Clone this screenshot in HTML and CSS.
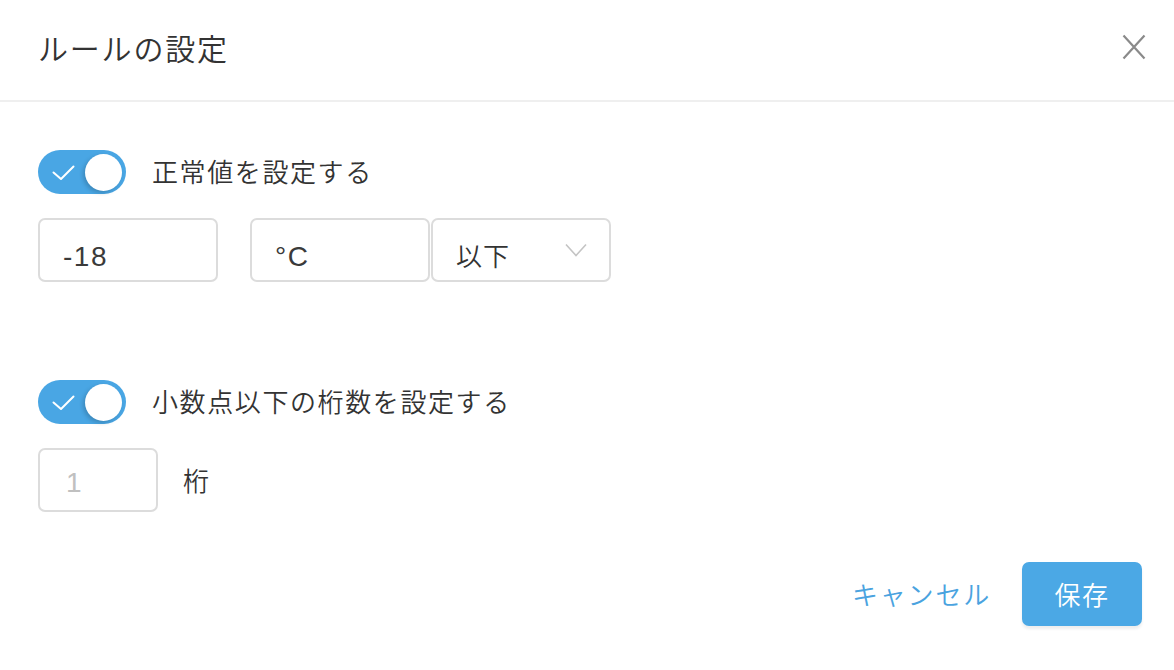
FILE: index.html
```html
<!DOCTYPE html>
<html lang="ja">
<head>
<meta charset="utf-8">
<title>ルールの設定</title>
<link rel="stylesheet" href="styles.css">
</head>
<body>
<div class="dialog">
  <header class="dialog-header">
    <h1 class="dialog-title">ルールの設定</h1>
    <button class="close-btn" aria-label="閉じる">
      <svg width="24" height="26" viewBox="0 0 24 26"><path d="M1.5 1.5 L22.5 24.5 M22.5 1.5 L1.5 24.5" stroke="#8a8a8a" stroke-width="2.2" fill="none"/></svg>
    </button>
  </header>
  <main class="dialog-body">
    <div class="toggle-row">
      <span class="toggle">
        <svg class="check" width="24" height="16" viewBox="0 0 24 16"><path d="M1.5 7.5 L9 14 L21.5 1.5" stroke="#fff" stroke-width="2" fill="none" stroke-linecap="round" stroke-linejoin="round"/></svg>
        <span class="knob"></span>
      </span>
      <span class="label">正常値を設定する</span>
    </div>
    <div class="field-row">
      <div class="box w180 latin">-18</div>
      <div class="box w180 ml32 latin">°C</div>
      <div class="box w180 select">以下
        <svg class="chev" width="22" height="14" viewBox="0 0 22 14"><path d="M1 1.5 L11 12.5 L21 1.5" stroke="#c4c4c4" stroke-width="1.6" fill="none"/></svg>
      </div>
    </div>
    <div class="toggle-row second">
      <span class="toggle">
        <svg class="check" width="24" height="16" viewBox="0 0 24 16"><path d="M1.5 7.5 L9 14 L21.5 1.5" stroke="#fff" stroke-width="2" fill="none" stroke-linecap="round" stroke-linejoin="round"/></svg>
        <span class="knob"></span>
      </span>
      <span class="label">小数点以下の桁数を設定する</span>
    </div>
    <div class="field-row">
      <div class="box w120 latin placeholder">1</div>
      <span class="unit">桁</span>
    </div>
  </main>
  <footer class="dialog-footer">
    <button class="btn-cancel">キャンセル</button>
    <button class="btn-save">保存</button>
  </footer>
</div>
</body>
</html>
```
FILE: styles.css
```css
* { box-sizing: border-box; }
html, body { margin: 0; padding: 0; background: #fff; }
body {
  font-family: "Noto Sans CJK JP", "Noto Sans", sans-serif;
  font-weight: 350;
  color: #333;
}
.dialog { width: 1174px; height: 670px; display: flex; flex-direction: column; }
.dialog-header {
  height: 102px;
  border-bottom: 2px solid #efefef;
  display: flex;
  align-items: center;
  justify-content: space-between;
  padding: 0 28px 6px 38px;
}
.dialog-title {
  margin: 0;
  font-size: 30px;
  font-weight: 350;
  letter-spacing: 1.8px;
  color: #333;
}
.close-btn {
  border: 0; background: none; padding: 0; width: 24px; height: 26px; display: block;
}
.close-btn svg { display: block; }
.dialog-body { padding: 48px 38px 0; display: flex; flex-direction: column; }
.toggle-row { display: flex; align-items: center; height: 44px; }
.toggle-row.second { margin-top: 98px; }
.toggle {
  width: 88px; height: 44px; border-radius: 22px;
  background: #49a6e4;
  display: flex; align-items: center; justify-content: space-between;
  padding: 0 4px 0 14px;
}
.check { display: block; margin-top: 2px; }
.knob {
  width: 37px; height: 37px; border-radius: 50%; background: #fff;
  box-shadow: -2px 2px 4px rgba(0,0,0,0.18);
}
.label {
  margin-left: 26px;
  font-size: 26px;
  letter-spacing: 1.6px;
  color: #333;
  padding-bottom: 3px;
}
.field-row { display: flex; align-items: center; margin-top: 24px; height: 64px; }
.box {
  height: 64px;
  border: 2px solid #dcdcdc;
  border-radius: 7px;
  display: flex; align-items: center;
  padding: 8px 0 0 22px;
  font-size: 26px;
  letter-spacing: 1px;
  color: #333;
}
.latin {
  font-family: "Liberation Sans", "Noto Sans CJK JP", sans-serif;
  font-weight: 400;
  font-size: 28px;
  letter-spacing: 1.5px;
  color: #3a3a3a;
  padding-top: 13px;
  padding-left: 23px;
}
.w180 { width: 180px; }
.w120 { width: 120px; }
.ml32 { margin-left: 32px; margin-right: 1px; }
.select { justify-content: space-between; padding-right: 22px; padding-left: 23px; }
.select .chev { margin-top: -8px; }
.placeholder { color: #c0c0c0; padding-left: 26px; padding-top: 6px; }
.unit { margin-left: 25px; font-size: 26px; color: #333; padding-bottom: 2px; }
.dialog-footer {
  margin-top: 50px;
  display: flex; justify-content: flex-end; align-items: center;
  padding-right: 32px;
}
.btn-cancel {
  border: 0; background: none; padding: 0 0 2px;
  font-family: inherit; font-weight: 350; font-size: 26px; letter-spacing: 1.8px;
  color: #4aa3df;
  margin-right: 31px;
}
.btn-save {
  width: 120px; height: 64px; border: 0; border-radius: 7px;
  background: #4ba8e5; color: #fff;
  font-family: inherit; font-weight: 350; font-size: 26px; letter-spacing: 1.5px;
  box-shadow: 0 3px 3px rgba(0,0,0,0.07);
  padding-bottom: 2px;
}
```
